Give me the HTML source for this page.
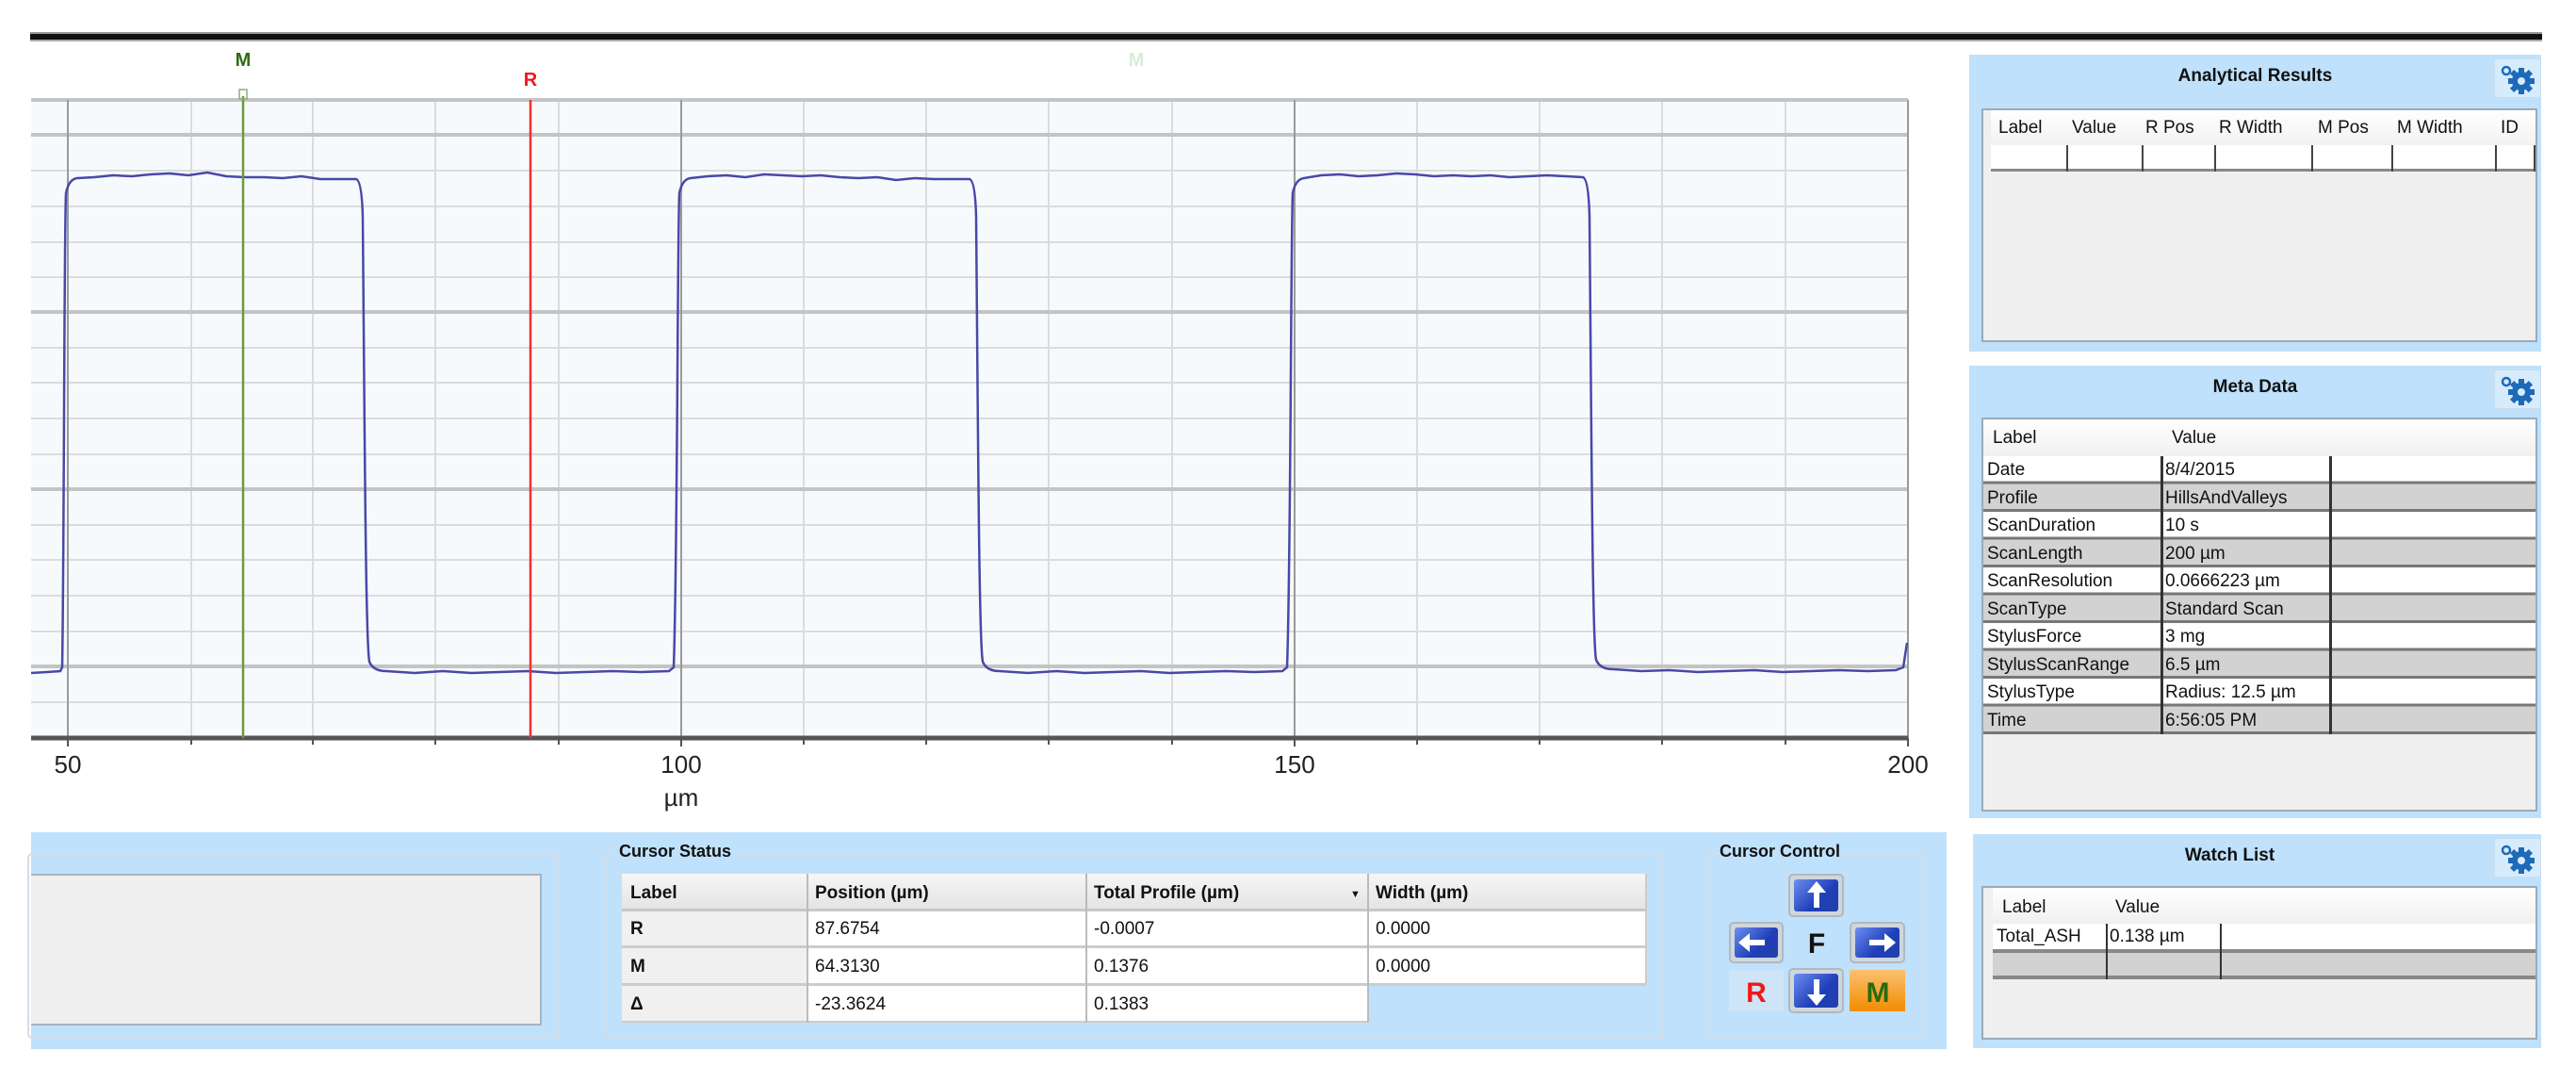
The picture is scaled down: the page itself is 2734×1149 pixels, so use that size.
<!DOCTYPE html>
<html><head><meta charset="utf-8"><style>
*{margin:0;padding:0;box-sizing:border-box}
body{width:2734px;height:1149px;background:#fff;position:relative;overflow:hidden;font-family:"Liberation Sans",sans-serif;color:#111}
.a{position:absolute}
.panel{position:absolute;background:#bfe1fb}
.ptitle{position:absolute;font-weight:bold;font-size:19px;color:#111}
.gear{position:absolute;width:50px;height:42px;background:#d6ebfb;border:1px solid #c8dcec;border-radius:3px}
.box{position:absolute;background:#efefef;border:2px solid #9aaab8}
.cell{position:absolute;font-size:19px;line-height:29px;padding-left:6px;white-space:nowrap;overflow:hidden}
.grp{position:absolute;border:2px solid #d4dde6;border-radius:5px}
.btn{position:absolute;border-radius:5px;background:#cfd6de;border:2px solid #b0b8c0}
.btn i{position:absolute;left:4px;top:4px;right:4px;bottom:4px;border-radius:3px;background:linear-gradient(135deg,#6e8ef0,#1f3fb8 60%,#2240a8)}
</style></head><body>

<!-- top bar -->
<div class="a" style="left:32px;top:34px;width:2666px;height:10px;background:#111;border-top:2px solid #999;border-bottom:2px solid #aaa"></div>

<!-- chart -->
<svg class="a" style="left:0;top:0" width="2070" height="870" viewBox="0 0 2070 870">
<rect x="33" y="106" width="1992" height="677" fill="#f7fafd"/>
<g stroke="#dcdcdc" stroke-width="2">
<line x1="33" y1="181" x2="2025" y2="181"/><line x1="33" y1="219" x2="2025" y2="219"/><line x1="33" y1="257" x2="2025" y2="257"/><line x1="33" y1="294" x2="2025" y2="294"/>
<line x1="33" y1="369" x2="2025" y2="369"/><line x1="33" y1="406" x2="2025" y2="406"/><line x1="33" y1="444" x2="2025" y2="444"/><line x1="33" y1="482" x2="2025" y2="482"/>
<line x1="33" y1="557" x2="2025" y2="557"/><line x1="33" y1="594" x2="2025" y2="594"/><line x1="33" y1="632" x2="2025" y2="632"/><line x1="33" y1="670" x2="2025" y2="670"/>
<line x1="33" y1="745" x2="2025" y2="745"/>
<line x1="203" y1="106" x2="203" y2="783"/><line x1="332" y1="106" x2="332" y2="783"/><line x1="462" y1="106" x2="462" y2="783"/><line x1="593" y1="106" x2="593" y2="783"/>
<line x1="853" y1="106" x2="853" y2="783"/><line x1="983" y1="106" x2="983" y2="783"/><line x1="1113" y1="106" x2="1113" y2="783"/><line x1="1244" y1="106" x2="1244" y2="783"/>
<line x1="1504" y1="106" x2="1504" y2="783"/><line x1="1634" y1="106" x2="1634" y2="783"/><line x1="1764" y1="106" x2="1764" y2="783"/><line x1="1895" y1="106" x2="1895" y2="783"/>
</g>
<g stroke="#c4c4c4" stroke-width="4">
<line x1="33" y1="106" x2="2025" y2="106"/><line x1="33" y1="143" x2="2025" y2="143"/><line x1="33" y1="331" x2="2025" y2="331"/><line x1="33" y1="519" x2="2025" y2="519"/><line x1="33" y1="707" x2="2025" y2="707"/>
</g>
<g stroke="#9a9a9a" stroke-width="2">
<line x1="72" y1="106" x2="72" y2="783"/><line x1="723" y1="106" x2="723" y2="783"/><line x1="1374" y1="106" x2="1374" y2="783"/><line x1="2025" y1="106" x2="2025" y2="783"/>
</g>
<line x1="33" y1="783" x2="2025" y2="783" stroke="#555" stroke-width="5"/>
<g stroke="#555" stroke-width="2">
<line x1="72" y1="783" x2="72" y2="792"/><line x1="203" y1="783" x2="203" y2="790"/><line x1="332" y1="783" x2="332" y2="790"/><line x1="462" y1="783" x2="462" y2="790"/><line x1="593" y1="783" x2="593" y2="790"/><line x1="723" y1="783" x2="723" y2="792"/><line x1="853" y1="783" x2="853" y2="790"/><line x1="983" y1="783" x2="983" y2="790"/><line x1="1113" y1="783" x2="1113" y2="790"/><line x1="1244" y1="783" x2="1244" y2="790"/><line x1="1374" y1="783" x2="1374" y2="792"/><line x1="1504" y1="783" x2="1504" y2="790"/><line x1="1634" y1="783" x2="1634" y2="790"/><line x1="1764" y1="783" x2="1764" y2="790"/><line x1="1895" y1="783" x2="1895" y2="790"/><line x1="2025" y1="783" x2="2025" y2="792"/>
</g>
<path fill="none" stroke="#4848a8" stroke-width="2.5" d="M33,714 L50,713 L64,712 L66,708 C68,600 68,250 70,205 Q73,190 82,189 L100,188 L120,186 L140,187 L160,185 L180,184 L200,186 L220,183 L240,187 L260,188 L280,188 L300,189 L320,187 L340,190 L360,190 L378,190 Q384,192 385,230 C387,450 388,680 392,702 Q396,712 410,712 L440,714 L470,712 L500,714 L530,713 L560,712 L590,714 L620,713 L650,712 L680,713 L710,712 L715,708 C719,600 719,250 721,205 Q724,190 733,189 L751,187 L771,186 L791,188 L811,185 L831,186 L851,187 L871,186 L891,188 L911,189 L931,188 L951,191 L971,189 L991,190 L1011,190 L1029,190 Q1035,192 1036,230 C1038,450 1039,680 1043,702 Q1047,712 1061,712 L1091,714 L1121,712 L1151,714 L1181,713 L1211,712 L1241,714 L1271,713 L1301,712 L1331,713 L1361,712 L1366,708 C1370,600 1370,250 1372,205 Q1375,190 1384,189 L1402,186 L1422,185 L1442,187 L1462,186 L1482,184 L1502,185 L1522,187 L1542,186 L1562,187 L1582,186 L1602,188 L1622,187 L1642,186 L1662,187 L1680,188 Q1686,190 1687,230 C1689,450 1690,680 1694,700 Q1698,710 1712,710 L1742,712 L1772,711 L1802,713 L1832,712 L1862,711 L1892,713 L1922,712 L1952,711 L1982,712 L2012,711 L2020,708 L2024,682"/>
<line x1="258" y1="102" x2="258" y2="783" stroke="#6a9a40" stroke-width="2.5"/>
<rect x="254" y="95" width="8" height="10" fill="none" stroke="#8ab070" stroke-width="1.5"/>
<line x1="563" y1="106" x2="563" y2="783" stroke="#f03030" stroke-width="2.5"/>
<text x="258" y="70" font-size="20" font-weight="bold" fill="#2e6a10" text-anchor="middle">M</text>
<text x="563" y="91" font-size="20" font-weight="bold" fill="#f01818" text-anchor="middle">R</text>
<text x="1206" y="70" font-size="20" font-weight="bold" fill="#d8ecd8" text-anchor="middle">M</text>
<g font-size="26" fill="#222" text-anchor="middle">
<text x="72" y="820">50</text><text x="723" y="820">100</text><text x="1374" y="820">150</text><text x="2025" y="820">200</text>
<text x="723" y="855">µm</text>
</g>
</svg>

<!-- Analytical Results -->
<div class="panel" style="left:2090px;top:58px;width:607px;height:315px">
<div class="ptitle" style="left:0;width:607px;text-align:center;top:12px">Analytical Results</div>
<div class="gear" style="left:557px;top:4px"></div>
<svg class="a" style="left:562px;top:8px" width="40" height="34" viewBox="0 0 40 34"><circle cx="8" cy="9" r="4" fill="none" stroke="#1e6ab8" stroke-width="2.5"/><g fill="#1e6ab8"><circle cx="24" cy="20" r="10"/><rect x="21" y="6" width="6" height="28"/><rect x="10" y="17" width="28" height="6"/><rect x="21" y="6" width="6" height="28" transform="rotate(45 24 20)"/><rect x="21" y="6" width="6" height="28" transform="rotate(-45 24 20)"/></g><circle cx="24" cy="20" r="4" fill="#d6ebfb"/></svg>
<div class="box" style="left:13px;top:57px;width:590px;height:248px">
 <div class="a" style="left:8px;top:0;width:578px;height:37px;background:linear-gradient(#fff,#f2f2f2)"></div>
 <div class="a" style="left:8px;top:37px;width:578px;height:28px;background:#fff;border-bottom:3px solid #888"></div>
 <div class="cell" style="left:10px;top:4px">Label</div><div class="cell" style="left:88px;top:4px">Value</div><div class="cell" style="left:166px;top:4px">R Pos</div><div class="cell" style="left:244px;top:4px">R Width</div><div class="cell" style="left:349px;top:4px">M Pos</div><div class="cell" style="left:433px;top:4px">M Width</div><div class="cell" style="left:543px;top:4px">ID</div>
 <div class="a" style="left:88px;top:37px;width:2px;height:28px;background:#444"></div><div class="a" style="left:168px;top:37px;width:2px;height:28px;background:#444"></div><div class="a" style="left:245px;top:37px;width:2px;height:28px;background:#444"></div><div class="a" style="left:348px;top:37px;width:2px;height:28px;background:#444"></div><div class="a" style="left:433px;top:37px;width:2px;height:28px;background:#444"></div><div class="a" style="left:543px;top:37px;width:2px;height:28px;background:#444"></div><div class="a" style="left:584px;top:37px;width:2px;height:28px;background:#444"></div>
</div>
</div>

<!-- Meta Data -->
<div class="panel" style="left:2090px;top:388px;width:607px;height:480px">
<div class="ptitle" style="left:0;width:607px;text-align:center;top:12px">Meta Data</div>
<div class="gear" style="left:557px;top:4px"></div>
<svg class="a" style="left:562px;top:8px" width="40" height="34" viewBox="0 0 40 34"><circle cx="8" cy="9" r="4" fill="none" stroke="#1e6ab8" stroke-width="2.5"/><g fill="#1e6ab8"><circle cx="24" cy="20" r="10"/><rect x="21" y="6" width="6" height="28"/><rect x="10" y="17" width="28" height="6"/><rect x="21" y="6" width="6" height="28" transform="rotate(45 24 20)"/><rect x="21" y="6" width="6" height="28" transform="rotate(-45 24 20)"/></g><circle cx="24" cy="20" r="4" fill="#d6ebfb"/></svg>
<div class="box" style="left:13px;top:55px;width:590px;height:418px">
 <div class="a" style="left:0;top:0;width:586px;height:39px;background:linear-gradient(#fff,#f0f0f0)"></div>
 <div class="cell" style="left:4px;top:5px">Label</div><div class="cell" style="left:194px;top:5px">Value</div>
 <div class="a" style="left:0;top:39px;width:586px;height:295px;background:repeating-linear-gradient(#fff 0,#fff 29.5px,#d2d2d2 29.5px,#d2d2d2 59px)"></div>
 <div class="a" style="left:0;top:39px;width:586px;height:295px;background:repeating-linear-gradient(transparent 0,transparent 26.5px,#777 26.5px,#777 29.5px)"></div>
 <div class="a" style="left:188px;top:39px;width:3px;height:295px;background:#333"></div>
 <div class="a" style="left:367px;top:39px;width:3px;height:295px;background:#333"></div>
 <div class="a" style="left:0;top:39px;font-size:19px;line-height:29.5px;padding-left:4px">Date<br>Profile<br>ScanDuration<br>ScanLength<br>ScanResolution<br>ScanType<br>StylusForce<br>StylusScanRange<br>StylusType<br>Time</div>
 <div class="a" style="left:193px;top:39px;font-size:19px;line-height:29.5px">8/4/2015<br>HillsAndValleys<br>10 s<br>200 µm<br>0.0666223 µm<br>Standard Scan<br>3 mg<br>6.5 µm<br>Radius: 12.5 µm<br>6:56:05 PM</div>
</div>
</div>

<!-- Watch List -->
<div class="panel" style="left:2094px;top:885px;width:603px;height:227px">
<div class="ptitle" style="left:0;width:545px;text-align:center;top:12px">Watch List</div>
<div class="gear" style="left:553px;top:4px"></div>
<svg class="a" style="left:558px;top:8px" width="40" height="34" viewBox="0 0 40 34"><circle cx="8" cy="9" r="4" fill="none" stroke="#1e6ab8" stroke-width="2.5"/><g fill="#1e6ab8"><circle cx="24" cy="20" r="10"/><rect x="21" y="6" width="6" height="28"/><rect x="10" y="17" width="28" height="6"/><rect x="21" y="6" width="6" height="28" transform="rotate(45 24 20)"/><rect x="21" y="6" width="6" height="28" transform="rotate(-45 24 20)"/></g><circle cx="24" cy="20" r="4" fill="#d6ebfb"/></svg>
<div class="box" style="left:9px;top:55px;width:590px;height:163px">
 <div class="a" style="left:10px;top:0;width:576px;height:38px;background:linear-gradient(#fff,#f0f0f0)"></div>
 <div class="cell" style="left:14px;top:6px">Label</div><div class="cell" style="left:134px;top:6px">Value</div>
 <div class="a" style="left:10px;top:38px;width:576px;height:27px;background:#fff"></div>
 <div class="cell" style="left:8px;top:37px">Total_ASH</div><div class="cell" style="left:128px;top:37px">0.138 µm</div>
 <div class="a" style="left:10px;top:65px;width:576px;height:32px;background:#d2d2d2;border-top:4px solid #888;border-bottom:4px solid #888"></div>
 <div class="a" style="left:130px;top:38px;width:2px;height:59px;background:#333"></div>
 <div class="a" style="left:251px;top:38px;width:2px;height:59px;background:#333"></div>
</div>
</div>

<!-- Bottom panel -->
<div class="panel" style="left:33px;top:883px;width:2033px;height:230px">
 <div class="grp" style="left:-4px;top:22px;width:565px;height:197px"></div>
 <div class="a" style="left:0;top:44px;width:542px;height:161px;background:#efefef;border:2px solid #a8b4c0;border-left:none"></div>

 <div class="grp" style="left:610px;top:22px;width:1123px;height:197px"></div>
 <div class="a" style="left:620px;top:10px;background:#bfe1fb;padding:0 4px;font-weight:bold;font-size:18px">Cursor Status</div>
 <div class="a" style="left:627px;top:44px;width:1087px;height:40px;background:linear-gradient(#f6f6f6,#e4e4e4);border-bottom:3px solid #c8c8c8"></div>
 <div class="a" style="left:627px;top:84px;width:197px;height:118px;background:#f0f0f0"></div>
 <div class="a" style="left:824px;top:84px;width:595px;height:118px;background:#fff"></div>
 <div class="a" style="left:1419px;top:84px;width:295px;height:78px;background:#fff"></div>
 <div class="a" style="left:627px;top:120px;width:1087px;height:3px;background:#ccc"></div>
 <div class="a" style="left:627px;top:160px;width:1087px;height:3px;background:#ccc"></div>
 <div class="a" style="left:627px;top:200px;width:792px;height:2px;background:#ccc"></div>
 <div class="a" style="left:823px;top:44px;width:2px;height:158px;background:#bbb"></div>
 <div class="a" style="left:1119px;top:44px;width:2px;height:158px;background:#bbb"></div>
 <div class="a" style="left:1418px;top:44px;width:2px;height:158px;background:#bbb"></div>
 <div class="a" style="left:1713px;top:44px;width:2px;height:118px;background:#ccc"></div>
 <div class="cell" style="left:630px;top:50px;font-weight:bold">Label</div>
 <div class="cell" style="left:826px;top:50px;font-weight:bold">Position (µm)</div>
 <div class="cell" style="left:1122px;top:50px;font-weight:bold">Total Profile (µm)</div>
 <div class="a" style="left:1400px;top:60px;font-size:11px">▼</div>
 <div class="cell" style="left:1421px;top:50px;font-weight:bold">Width (µm)</div>
 <div class="cell" style="left:630px;top:88px;font-weight:bold">R</div><div class="cell" style="left:826px;top:88px">87.6754</div><div class="cell" style="left:1122px;top:88px">-0.0007</div><div class="cell" style="left:1421px;top:88px">0.0000</div>
 <div class="cell" style="left:630px;top:128px;font-weight:bold">M</div><div class="cell" style="left:826px;top:128px">64.3130</div><div class="cell" style="left:1122px;top:128px">0.1376</div><div class="cell" style="left:1421px;top:128px">0.0000</div>
 <div class="cell" style="left:630px;top:168px;font-weight:bold">Δ</div><div class="cell" style="left:826px;top:168px">-23.3624</div><div class="cell" style="left:1122px;top:168px">0.1383</div>

 <div class="grp" style="left:1780px;top:22px;width:230px;height:197px"></div>
 <div class="a" style="left:1788px;top:10px;background:#bfe1fb;padding:0 4px;font-weight:bold;font-size:18px">Cursor Control</div>
 <div class="btn" style="left:1865px;top:44px;width:59px;height:46px"><i></i></div>
 <div class="btn" style="left:1802px;top:95px;width:58px;height:44px"><i></i></div>
 <div class="btn" style="left:1930px;top:95px;width:59px;height:44px"><i></i></div>
 <div class="btn" style="left:1865px;top:144px;width:59px;height:48px"><i></i></div>
 <div class="a" style="left:1930px;top:146px;width:59px;height:44px;background:linear-gradient(#fbc070,#f28c00)"></div>
 <div class="a" style="left:1802px;top:146px;width:58px;height:44px;background:#cde5f6"></div>
 <svg class="a" style="left:1802px;top:44px" width="190" height="150" viewBox="0 0 190 150">
  <g fill="#fff"><path d="M93,8 L83,20 L90,20 L90,36 L96,36 L96,20 L103,20 Z"/><path d="M10,73 L22,63 L22,70 L38,70 L38,76 L22,76 L22,83 Z"/><path d="M177,73 L165,63 L165,70 L149,70 L149,76 L165,76 L165,83 Z"/><path d="M93,140 L83,128 L90,128 L90,112 L96,112 L96,128 L103,128 Z"/></g>
  <text x="93" y="84" font-size="30" font-weight="bold" fill="#111" text-anchor="middle">F</text>
  <text x="29" y="136" font-size="30" font-weight="bold" fill="#f01818" text-anchor="middle">R</text>
  <text x="158" y="136" font-size="30" font-weight="bold" fill="#2a6a10" text-anchor="middle">M</text>
 </svg>
</div>
</body></html>
